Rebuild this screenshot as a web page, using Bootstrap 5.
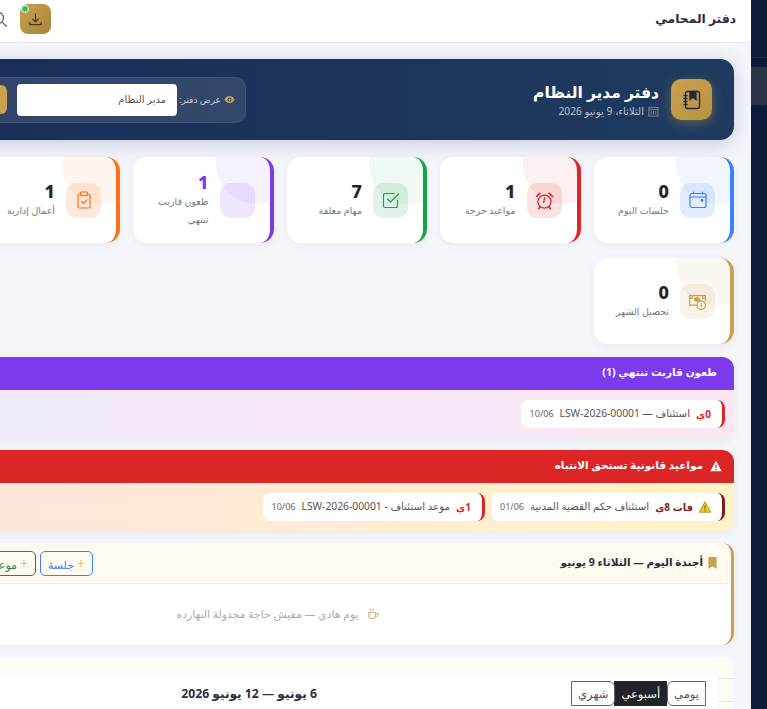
<!DOCTYPE html>
<html lang="ar" dir="rtl">
<head>
    <meta charset="UTF-8">
    <meta name="viewport" content="width=device-width, initial-scale=1.0">
    <title>دفتر المحامي</title>
    <link rel="stylesheet" href="https://cdn.jsdelivr.net/npm/bootstrap@5.3.0/dist/css/bootstrap.min.css">
    <style>
        body {
            background-color: #f4f6fb;
            color: #2b2d42;
            font-family: "Noto Sans", "DejaVu Sans", sans-serif;
            font-size: 12px;
            overflow: hidden;
        }
        .side-rail {
            width: 16px;
            flex: none;
            background-color: #0d1b3a;
            padding-top: 57px;
        }
        .side-rail-line {
            height: 10px;
            border-top: 1px solid #1c2a4a;
        }
        .side-rail-item {
            height: 38px;
            background-color: #2d3448;
        }
        .main-col {
            width: 944px;
            flex: none;
        }
        .top-strip {
            height: 43px;
            background-color: #fff;
            border-bottom: 1px solid #e8eaf0;
            padding: 0 15px 4px 183px;
        }
        .top-title {
            font-size: 12.3px;
            font-weight: 700;
        }
        .install-btn {
            width: 31px;
            height: 30px;
            border-radius: 8px;
            background: linear-gradient(135deg, #c9a24f, #a8823a);
        }
        .install-dot {
            position: absolute;
            top: 1px;
            left: 1px;
            width: 8px;
            height: 8px;
            border-radius: 50%;
            background-color: #22c55e;
            border: 1.5px solid #fff;
        }
        .page-pad {
            padding: 16px 17px 0;
        }
        .hero-band {
            height: 81px;
            padding: 0 22px;
            border-radius: 14px;
            background: linear-gradient(270deg, #1e3a5f, #1a2c58);
            box-shadow: 0 4px 20px rgba(26, 44, 88, .22);
        }
        .hero-icon {
            width: 41px;
            height: 41px;
            border-radius: 10px;
            background: linear-gradient(135deg, #c9a24f, #b8923f);
            box-shadow: 0 3px 12px rgba(201, 162, 79, .4);
        }
        .hero-title {
            font-size: 15.5px;
            font-weight: 700;
            color: #fff;
            line-height: 24px;
        }
        .hero-date {
            font-size: 10.2px;
            color: rgba(255, 255, 255, .7);
        }
        .filter-box {
            width: 400px;
            height: 46px;
            padding: 0 10px 0 8px;
            border-radius: 10px;
            background-color: rgba(255, 255, 255, .1);
            border: 1px solid rgba(255, 255, 255, .08);
            color: rgba(255, 255, 255, .75);
            font-size: 9px;
        }
        .filter-label {
            margin: 0 3px 0 2px;
            white-space: nowrap;
        }
        .filter-select {
            width: 160px;
            height: 32px;
            flex: none;
            padding: 0 11px;
            font-size: 10px;
            color: #555;
            background-image: none;
            background-color: #fff;
            border: 0;
            border-radius: 4px;
        }
        .filter-go {
            height: 29px;
            margin-right: 10px;
            border-radius: 6px;
            background-color: #c9a24f;
        }
        .stat-grid {
            display: grid;
            grid-template-columns: repeat(5, 140.5px);
            grid-auto-rows: 86px;
            gap: 15px 13px;
            margin-top: 17px;
        }
        .stat-tile {
            position: relative;
            overflow: hidden;
            gap: 11px;
            padding: 0 15px 0 8px;
            background-color: #fff;
            border-radius: 14px;
            border-right: 4px solid var(--tone);
            box-shadow: 0 2px 8px rgba(30, 40, 80, .05);
        }
        .stat-blob {
            position: absolute;
            top: -33px;
            right: -26px;
            width: 80px;
            height: 80px;
            border-radius: 50%;
            background-color: var(--tone);
            opacity: .07;
        }
        .stat-icon {
            width: 35px;
            height: 35px;
            flex: none;
            border-radius: 10px;
            background-color: var(--wash);
            color: var(--tone);
        }
        .stat-num {
            font-size: 18px;
            font-weight: 800;
            line-height: 22px;
            color: #2d2418;
        }
        .stat-label {
            font-size: 9.5px;
            line-height: 18px;
            color: #777;
        }
        .alert-panel {
            margin-top: 13px;
            border-radius: 12px;
            overflow: hidden;
            box-shadow: 0 3px 10px rgba(30, 40, 80, .06);
        }
        .alert-panel-head {
            height: 33px;
            padding: 0 17px 1px;
            color: #fff;
            font-size: 10.5px;
            font-weight: 700;
        }
        .alert-panel-body {
            height: 48px;
            padding: 10px 9px;
        }
        .deadline-chip {
            height: 28px;
            padding: 0 11px 0 9px;
            gap: 6px;
            background-color: #fff;
            border-radius: 8px;
            border-right: 3px solid #dc2626;
            font-size: 10.3px;
            color: #555;
            white-space: nowrap;
        }
        .chip-days {
            color: #dc2626;
            font-weight: 700;
            font-size: 10px;
        }
        .chip-date {
            font-size: 9px;
            color: #666;
        }
        .agenda-panel {
            margin-top: 12px;
            height: 102px;
            border-radius: 12px;
            overflow: hidden;
            background-color: #fff;
            border-right: 3px solid #c9a24f;
            box-shadow: 0 2px 8px rgba(30, 40, 80, .05);
        }
        .agenda-head {
            height: 41px;
            padding: 0 13px 0 107px;
            background-color: #fffaf0;
            border-bottom: 1px solid #f0eee8;
            font-size: 10.5px;
            font-weight: 700;
        }
        .agenda-add {
            height: 25px;
            padding: 0 7px;
            font-size: 11px;
            border-radius: 5px;
        }
        .agenda-add-blue {
            --bs-btn-color: #3b82f6;
            --bs-btn-border-color: #3b82f6;
        }
        .agenda-plus {
            color: #c9a24f;
            font-size: 14px;
            font-weight: 300;
        }
        .agenda-empty {
            height: 60px;
            color: #aaa;
            font-size: 10.8px;
        }
        .week-panel {
            margin-top: 12px;
            height: 80px;
            padding: 16px 16px 0 0;
            border-radius: 12px;
            background: repeating-linear-gradient(#fdfbf6 0 21px, #efe9dd 21px 22px, #fdfbf6 22px 23px);
        }
        .week-inner {
            height: 64px;
            padding: 8px 12px;
            background-color: #fff;
            border-radius: 8px 8px 0 0;
        }
        .week-toggle .btn {
            height: 25px;
            padding: 0 6px;
            font-size: 11.5px;
        }
        .week-toggle .btn-outline-dark {
            --bs-btn-color: #555;
            --bs-btn-border-color: #666;
        }
        .week-range {
            font-size: 12.2px;
            font-weight: 700;
            line-height: 25px;
        }
        .week-nav {
            width: 90px;
        }
    </style>
</head>
<body>

<div class="d-flex vh-100 overflow-hidden">
    <div class="side-rail">
        <div class="side-rail-line"></div>
        <div class="side-rail-item"></div>
    </div>

    <div class="main-col">
        <div class="top-strip d-flex justify-content-between align-items-center">
            <div class="top-title">دفتر المحامي</div>
            <div class="d-flex align-items-center gap-2">
                <div class="install-btn position-relative d-flex align-items-center justify-content-center">
                    <span class="install-dot"></span>
                    <svg width="15" height="15" viewBox="0 0 16 16" fill="none" stroke="#3d3320" stroke-width="1.2" stroke-linecap="round" stroke-linejoin="round"><path d="M8 2v8M5 7.500 8 10.500 11 7.500M2 11v2.500h12V11"/></svg>
                </div>
                <svg class="me-1" width="18" height="18" viewBox="0 0 16 16" fill="none" stroke="#5d6785" stroke-width="1.2" stroke-linecap="round"><circle cx="7" cy="7" r="5"/><path d="M11 11l3.500 3.500"/></svg>
            </div>
        </div>

        <div class="page-pad">
            <div class="hero-band d-flex justify-content-between align-items-center">
                <div class="d-flex align-items-center gap-2">
                    <div class="hero-icon d-flex align-items-center justify-content-center ms-1">
                        <svg width="20" height="20" viewBox="0 0 20 20" fill="none" stroke="#1e2a45" stroke-width="1.400" stroke-linecap="round"><rect x="3.500" y="1.500" width="14" height="17" rx="2"/><path d="M2 5.500h3M2 8.500h3M2 11.500h3M2 14.500h3"/><path d="M8 1.500h6v8l-3-2.200-3 2.200z" fill="#1e2a45"/></svg>
                    </div>
                    <div>
                        <div class="hero-title">دفتر مدير النظام</div>
                        <div class="hero-date d-flex align-items-center gap-1">
                            <svg width="11" height="11" viewBox="0 0 12 12" fill="none" stroke="#8d8a7a" stroke-width="1"><rect x="1" y="1.500" width="10" height="9.500"/><path d="M1 4h10M3.500 5.500v4M6 5.500v4M8.500 5.500v4"/></svg>
                            <span>الثلاثاء، 9 يونيو 2026</span>
                        </div>
                    </div>
                </div>
                <div class="filter-box d-flex align-items-center">
                    <svg width="11" height="11" viewBox="0 0 16 16" fill="#c9a24f"><path d="M8 3C4.500 3 1.800 5.400.5 8c1.300 2.600 4 5 7.500 5s6.200-2.400 7.500-5C14.200 5.400 11.500 3 8 3zm0 8a3 3 0 1 1 0-6 3 3 0 0 1 0 6z"/><circle cx="8" cy="8" r="1.600"/></svg>
                    <span class="filter-label">عرض دفتر:</span>
                    <select class="form-select filter-select">
                        <option>مدير النظام</option>
                    </select>
                    <div class="filter-go flex-grow-1"></div>
                </div>
            </div>

            <div class="stat-grid">
                <div class="stat-tile d-flex align-items-center" style="--tone:#3b82f6;--wash:rgba(59,130,246,.14)">
                    <span class="stat-blob"></span>
                    <div class="stat-icon d-flex align-items-center justify-content-center">
                        <svg width="18" height="18" viewBox="0 0 18 18" fill="none" stroke="currentColor" stroke-width="1.2" stroke-linecap="round"><rect x="1" y="2.500" width="16" height="14" rx="2"/><path d="M1 6h16M4.500 1v2M13.500 1v2"/><circle cx="13" cy="9.500" r=".8" fill="currentColor"/></svg>
                    </div>
                    <div>
                        <div class="stat-num">0</div>
                        <div class="stat-label">جلسات اليوم</div>
                    </div>
                </div>
                <div class="stat-tile d-flex align-items-center" style="--tone:#dc2626;--wash:rgba(220,38,38,.13)">
                    <span class="stat-blob"></span>
                    <div class="stat-icon d-flex align-items-center justify-content-center">
                        <svg width="19" height="19" viewBox="0 0 18 18" fill="none" stroke="currentColor" stroke-width="1.2" stroke-linecap="round"><circle cx="9" cy="10" r="6.200"/><path d="M9 6.500 8.300 11"/><path d="M1.500 5 4.500 2.200M16.500 5l-3-2.800M4.500 15l-1 1.800M13.500 15l1 1.800" stroke-width="1.600"/></svg>
                    </div>
                    <div>
                        <div class="stat-num">1</div>
                        <div class="stat-label">مواعيد حرجة</div>
                    </div>
                </div>
                <div class="stat-tile d-flex align-items-center" style="--tone:#16a34a;--wash:rgba(22,163,74,.13)">
                    <span class="stat-blob"></span>
                    <div class="stat-icon d-flex align-items-center justify-content-center">
                        <svg width="18" height="18" viewBox="0 0 18 18" fill="none" stroke="currentColor" stroke-width="1.2" stroke-linecap="round" stroke-linejoin="round"><path d="M15.500 9v6a1.500 1.500 0 0 1-1.500 1.500H3A1.500 1.500 0 0 1 1.500 15V4A1.500 1.500 0 0 1 3 2.500h9"/><path d="M5.500 8 8.500 11 16.500 3"/></svg>
                    </div>
                    <div>
                        <div class="stat-num">7</div>
                        <div class="stat-label">مهام معلقة</div>
                    </div>
                </div>
                <div class="stat-tile d-flex align-items-center" style="--tone:#7c3aed;--wash:rgba(124,58,237,.12)">
                    <span class="stat-blob"></span>
                    <div class="stat-icon"></div>
                    <div>
                        <div class="stat-num" style="color:#7c3aed">1</div>
                        <div class="stat-label">طعون قاربت تنتهي</div>
                    </div>
                </div>
                <div class="stat-tile d-flex align-items-center" style="--tone:#f97316;--wash:rgba(249,115,22,.15)">
                    <span class="stat-blob"></span>
                    <div class="stat-icon d-flex align-items-center justify-content-center">
                        <svg width="18" height="18" viewBox="0 0 18 18" fill="none" stroke="currentColor" stroke-width="1.2" stroke-linecap="round" stroke-linejoin="round"><path d="M5.500 3H4.500A1.500 1.500 0 0 0 3 4.500v11A1.500 1.500 0 0 0 4.500 17h9a1.500 1.500 0 0 0 1.500-1.500v-11A1.500 1.500 0 0 0 13.500 3h-1"/><rect x="5.500" y="1" width="7" height="3.500" rx="1"/><path d="M6.500 10.500 8.500 12.300 11.700 8.800"/></svg>
                    </div>
                    <div>
                        <div class="stat-num">1</div>
                        <div class="stat-label text-nowrap">أعمال إدارية</div>
                    </div>
                </div>
                <div class="stat-tile d-flex align-items-center" style="--tone:#c9a24f;--wash:rgba(201,162,79,.12)">
                    <span class="stat-blob"></span>
                    <div class="stat-icon d-flex align-items-center justify-content-center">
                        <svg width="19" height="19" viewBox="0 0 18 18" fill="none" stroke="currentColor" stroke-width="1.2" stroke-linecap="round"><path d="M8 12.500H1.500v-9h15V8"/><path d="M1.500 6h2.500V3.500M14 3.500V6h2.500"/><ellipse cx="8.500" cy="7" rx="2.200" ry="1.700" fill="currentColor"/><circle cx="12.500" cy="12.500" r="4"/><path d="M12.500 10.700v3.600" stroke-width="1"/></svg>
                    </div>
                    <div>
                        <div class="stat-num">0</div>
                        <div class="stat-label">تحصيل الشهر</div>
                    </div>
                </div>
            </div>

            <div class="alert-panel">
                <div class="alert-panel-head d-flex align-items-center" style="background-color:#7c3aed">طعون قاربت تنتهي (1)</div>
                <div class="alert-panel-body d-flex gap-2" style="background:linear-gradient(270deg,#fce7f3,#ede9fe)">
                    <div class="deadline-chip d-flex align-items-center">
                        <span class="chip-days">0ي</span>
                        <span>استئناف — LSW-2026-00001</span>
                        <span class="chip-date">10/06</span>
                    </div>
                </div>
            </div>

            <div class="alert-panel" style="margin-top:12px">
                <div class="alert-panel-head d-flex align-items-center" style="background-color:#dc2626;gap:7px;padding-right:12px">
                    <svg width="12" height="12" viewBox="0 0 16 16" fill="#fff"><path d="M8 1 .3 15h15.400zM7.200 6h1.600v5H7.200zm0 6h1.600v1.500H7.200z" fill-rule="evenodd"/></svg>
                    <span>مواعيد قانونية تستحق الانتباه</span>
                </div>
                <div class="alert-panel-body d-flex" style="gap:6px;background:linear-gradient(270deg,#fef3c7,#fee2e2)">
                    <div class="deadline-chip d-flex align-items-center" style="border-right-color:#7f1d1d">
                        <svg width="12" height="12" viewBox="0 0 16 16"><path d="M8 1 .5 15h15z" fill="#facc15" stroke="#8a7a20"/><path d="M8 6v5M8 12v1.500" stroke="#5a4a10" stroke-width="1.300"/></svg>
                        <span class="chip-days" style="color:#7f1d1d">فات 8ي</span>
                        <span>استئناف حكم القضية المدنية</span>
                        <span class="chip-date">01/06</span>
                    </div>
                    <div class="deadline-chip d-flex align-items-center">
                        <span class="chip-days">1ي</span>
                        <span>موعد استئناف - LSW-2026-00001</span>
                        <span class="chip-date">10/06</span>
                    </div>
                </div>
            </div>

            <div class="agenda-panel">
                <div class="agenda-head d-flex justify-content-between align-items-center">
                    <div class="d-flex align-items-center gap-1">
                        <svg width="11" height="12" viewBox="0 0 12 13" fill="#c9a24f"><path d="M1.500 0h9v13L6 10 1.500 13z"/></svg>
                        <span>أجندة اليوم — الثلاثاء 9 يونيو</span>
                    </div>
                    <div class="d-flex gap-1">
                        <button type="button" class="btn btn-outline-primary agenda-add agenda-add-blue"><span class="agenda-plus">+</span> جلسة</button>
                        <button type="button" class="btn btn-outline-success agenda-add"><span class="agenda-plus">+</span> موعد</button>
                        <button type="button" class="btn btn-outline-secondary agenda-add"><span class="agenda-plus">+</span> مهمة</button>
                    </div>
                </div>
                <div class="agenda-empty d-flex align-items-center justify-content-center gap-2">
                    <svg width="12" height="12" viewBox="0 0 16 16" fill="none" stroke="#cdb27a" stroke-width="1.500" stroke-linecap="round"><path d="M2.500 6h9v5a3 3 0 0 1-3 3h-3a3 3 0 0 1-3-3zM11.500 7H13a1.500 1.500 0 0 1 0 4h-1.500M5 1.500v2M8 1.500v2"/></svg>
                    <span>يوم هادي — مفيش حاجة مجدولة النهارده</span>
                </div>
            </div>

            <div class="week-panel">
                <div class="week-inner d-flex justify-content-between align-items-start">
                    <div class="btn-group week-toggle">
                        <button type="button" class="btn btn-outline-dark">يومي</button>
                        <button type="button" class="btn btn-dark">أسبوعي</button>
                        <button type="button" class="btn btn-outline-dark">شهري</button>
                    </div>
                    <div class="week-range">6 يونيو — 12 يونيو 2026</div>
                    <div class="week-nav"></div>
                </div>
            </div>
        </div>
    </div>
</div>

<script src="https://cdn.jsdelivr.net/npm/bootstrap@5.3.0/dist/js/bootstrap.bundle.min.js"></script>
</body>
</html>
